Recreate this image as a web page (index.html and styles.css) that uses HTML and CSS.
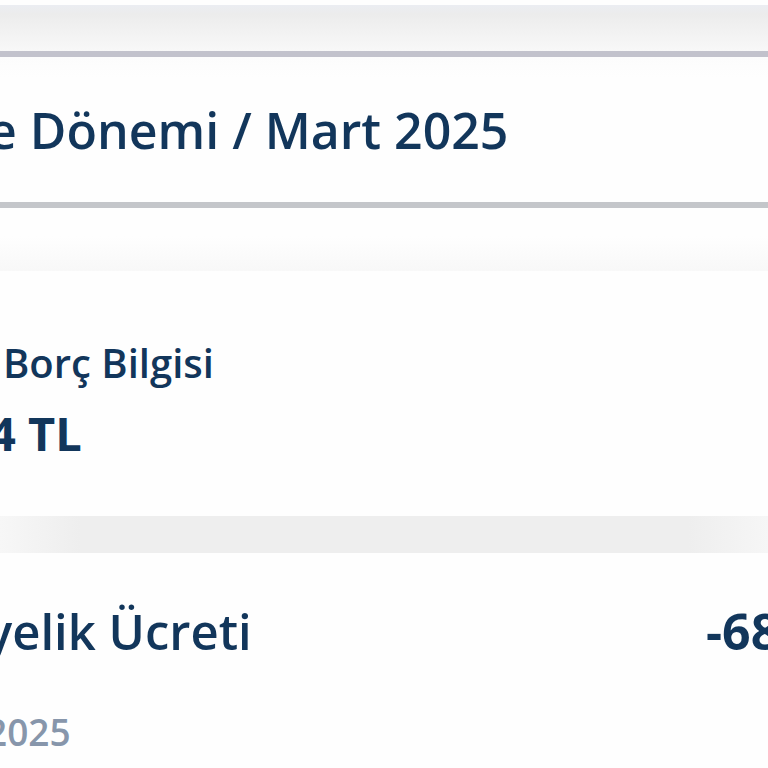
FILE: index.html
```
<!DOCTYPE html>
<html lang="tr">
<head>
  <meta charset="utf-8">
  <title>Borç Bilgisi</title>
  <link rel="stylesheet" href="styles.css">
</head>
<body>
  <header class="top-shade"></header>

  <section class="period">
    <h1 class="period-title cut">e Dönemi / Mart 2025</h1>
  </section>
  <div class="period-shade"></div>

  <section class="debt">
    <h2 class="debt-label">Borç Bilgisi</h2>
    <p class="debt-amount cut">4 TL</p>
  </section>
  <div class="debt-shade"></div>

  <main class="fee">
    <div class="fee-row">
      <h2 class="fee-title cut">yelik Ücreti</h2>
      <strong class="fee-amount">-68</strong>
    </div>
    <p class="fee-date cut">2025</p>
  </main>
</body>
</html>
```
FILE: styles.css
```
* {
  box-sizing: border-box;
}
body {
  margin: 0;
  background: #fefefe;
  color: #12365b;
  font-family: "Open Sans", sans-serif;
  overflow: hidden;
}
h1, h2, p {
  margin: 0;
  white-space: nowrap;
}

/* rows that run off the left edge */
.cut {
  margin-left: -14px;
}

.top-shade {
  height: 51px;
  border-top: 5px solid #fefefe;
  background: linear-gradient(#ebedf2, #ececec 20%, #f8f8f8);
}
.period {
  padding: 39px 0 38px 2px;
  border-top: 6px solid #c2c2cc;
  border-bottom: 6px solid #c4c6ca;
  background: linear-gradient(#fcfcfc, #fefefe 20px);
}
.period-title {
  font-size: 50px;
  line-height: 68px;
  font-weight: 600;
}
.period-shade {
  height: 63px;
  background: linear-gradient(#fefefe 45%, #f8f8f8);
}

.debt {
  padding: 65px 0 51px 3px;
}
.debt-label {
  font-size: 40px;
  line-height: 54px;
  font-weight: 600;
}
.debt-amount {
  padding-top: 11px;
  font-size: 47px;
  line-height: 64px;
  font-weight: 700;
}
.debt-shade {
  height: 37px;
  background: linear-gradient(90deg, #f7f7f7, #eeeeee 80px, #eeeeee calc(100% - 80px), #f6f6f6);
}

.fee {
  padding: 44px 0;
}
.fee-row {
  display: flex;
  justify-content: space-between;
}
.fee-title {
  font-size: 49px;
  line-height: 68px;
  font-weight: 600;
}
.fee-amount {
  width: 62px;
  font-size: 50px;
  line-height: 68px;
  font-weight: 700;
}
.fee-date {
  margin-top: 42px;
  font-size: 37px;
  line-height: 50px;
  font-weight: 600;
  color: #8796ab;
}
```
